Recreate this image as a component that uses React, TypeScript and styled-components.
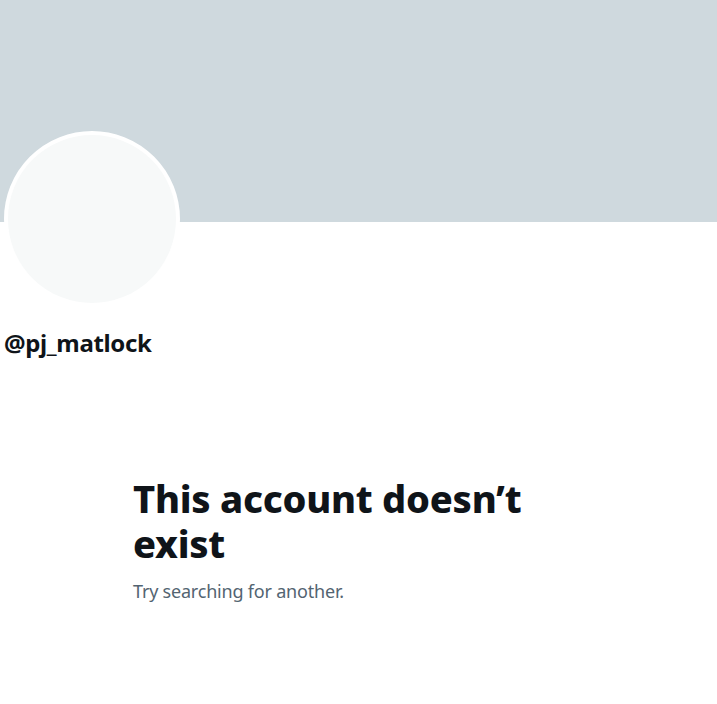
import React from "react";
import styled, { createGlobalStyle } from "styled-components";

const Global = createGlobalStyle`
  html, body { margin: 0; padding: 0; background: #ffffff; }
  body { font-family: "Noto Sans", "Open Sans", Arial, sans-serif; color: #0f1419; }
`;

const Page = styled.div`
  width: 717px;
  min-height: 704px;
  background: #ffffff;
  overflow: hidden;
`;

const Banner = styled.div`
  height: 222px;
  background: #cfd9de;
`;

const ProfileHeader = styled.div`
  display: flex;
  flex-direction: column;
  align-items: flex-start;
  padding-left: 4px;
`;

const Avatar = styled.div`
  width: 168px;
  height: 168px;
  margin-top: -91px;
  border: 4px solid #ffffff;
  border-radius: 50%;
  background: #f7f9f9;
`;

const Username = styled.div`
  margin-top: 21px;
  font-size: 24px;
  line-height: 30px;
  font-weight: 700;
  color: #0f1419;
  letter-spacing: -0.35px;
`;

const EmptyState = styled.div`
  width: 451px;
  margin: 118px auto 0;
  display: flex;
  flex-direction: column;
`;

const Title = styled.h1`
  margin: 0;
  font-size: 38px;
  line-height: 45px;
  font-weight: 800;
  color: #0f1419;
  letter-spacing: -0.25px;
`;

const Subtitle = styled.p`
  margin: 13px 0 0;
  font-size: 18px;
  line-height: 25px;
  font-weight: 400;
  color: #536471;
  letter-spacing: -0.2px;
`;

export default function App() {
  return (
    <Page>
      <Global />
      <Banner />
      <ProfileHeader>
        <Avatar />
        <Username>@pj_matlock</Username>
      </ProfileHeader>
      <EmptyState>
        <Title>This account doesn’t exist</Title>
        <Subtitle>Try searching for another.</Subtitle>
      </EmptyState>
    </Page>
  );
}
